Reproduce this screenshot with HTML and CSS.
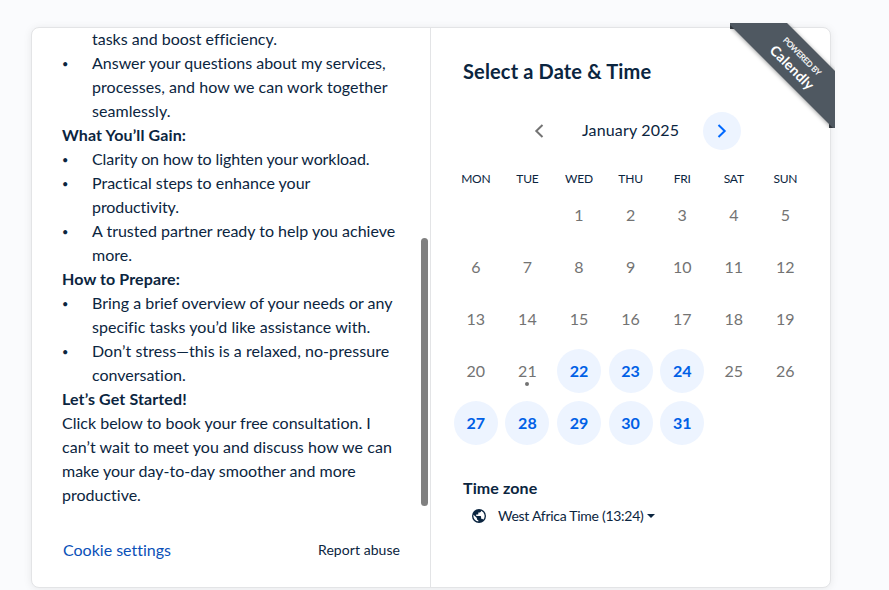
FILE: index.html
```html
<!DOCTYPE html>
<html lang="en">
<head>
<meta charset="utf-8">
<title>Select a Date &amp; Time</title>
<link rel="stylesheet" href="styles.css">
</head>
<body>
<main class="card">
  <section class="details">
    <div class="description">
      <ul>
        <li class="continued">tasks and boost efficiency.</li>
        <li>Answer your questions about my services,<br><span class="wide">processes, and how we can work together<br>seamlessly.</span></li>
      </ul>
      <h2>What You’ll Gain:</h2>
      <ul>
        <li class="tight">Clarity on how to lighten your workload.</li>
        <li>Practical steps to enhance your<br><span class="tight">productivity.</span></li>
        <li>A trusted partner ready to help you achieve<br>more.</li>
      </ul>
      <h2>How to Prepare:</h2>
      <ul>
        <li>Bring a brief overview of your needs or any<br><span class="wide">specific tasks you’d like assistance with.</span></li>
        <li><span class="wide">Don’t stress—this is a relaxed, no-pressure</span><br>conversation.</li>
      </ul>
      <h2>Let’s Get Started!</h2>
      <p>Click below to book your free consultation. I<br><span class="wide">can’t wait to meet you and discuss how we can</span><br>make your day-to-day smoother and more<br>productive.</p>
    </div>
    <footer class="links">
      <a class="cookie">Cookie settings</a>
      <a class="report">Report abuse</a>
    </footer>
    <div class="scrollbar"></div>
  </section>
  <section class="booking">
    <h1>Select a Date &amp; Time</h1>
    <div class="month">
      <span class="nav prev"><svg width="10" height="14" viewBox="0 0 10 14"><path d="M8.5 1 2.3 7l6.2 6"/></svg></span>
      <span class="month-name">January 2025</span>
      <span class="nav next"><svg width="10" height="14" viewBox="0 0 10 14"><path d="M1.5 1 7.7 7l-6.2 6"/></svg></span>
    </div>
    <div class="week"><span>MON</span><span>TUE</span><span>WED</span><span>THU</span><span>FRI</span><span>SAT</span><span>SUN</span></div>
    <div class="days">
      <span></span><span></span><span>1</span><span>2</span><span>3</span><span>4</span><span>5</span>
      <span>6</span><span>7</span><span>8</span><span>9</span><span>10</span><span>11</span><span>12</span>
      <span>13</span><span>14</span><span>15</span><span>16</span><span>17</span><span>18</span><span>19</span>
      <span>20</span><span class="today">21</span><span class="open">22</span><span class="open">23</span><span class="open">24</span><span>25</span><span>26</span>
      <span class="open">27</span><span class="open">28</span><span class="open">29</span><span class="open">30</span><span class="open">31</span>
    </div>
    <h3>Time zone</h3>
    <div class="zone">
      <svg class="globe" width="14" height="14" viewBox="0 0 10 10"><path fill-rule="evenodd" d="M5 0a5 5 0 1 0 0 10A5 5 0 0 0 5 0ZM4.5 8.96A4 4 0 0 1 1.1 4.1L3.5 6.5V7c0 .55.45 1 1 1ZM7.95 7.7A1 1 0 0 0 7 7h-.5V5.5A.5.5 0 0 0 6 5H3V4h1a.5.5 0 0 0 .5-.5v-1h1a1 1 0 0 0 1-1v-.2A4 4 0 0 1 7.95 7.7Z"/></svg>
      <span class="zone-name">West Africa Time (13:24)</span>
      <svg class="caret" width="8" height="4" viewBox="0 0 8 4"><path d="M0 0h8L4 4Z"/></svg>
    </div>
  </section>
  <svg class="ribbon" width="105" height="105" viewBox="0 0 105 105">
    <path class="fold" d="M0 0h8v6H0ZM99 97h6v8h-6Z"/>
    <path class="band" d="M-2 0H57L105 48V107Z"/>
    <text class="powered" transform="translate(71.5 34) rotate(45)" textLength="50">POWERED BY</text>
    <text class="brand" transform="translate(61 45.5) rotate(45)" textLength="56">Calendly</text>
  </svg>
</main>
</body>
</html>
```
FILE: styles.css
```css
* { box-sizing: border-box; }
body {
  margin: 0;
  height: 590px;
  overflow: hidden;
  padding: 27px 0 0 31px;
  background: #fafbfd;
  color: #0b2540;
  font: 16px/24px Lato, "Liberation Sans", sans-serif;
  font-variant-ligatures: none;
}
.card {
  position: relative;
  display: flex;
  width: 800px;
  height: 561px;
  background: #fff;
  border: 1px solid #e3e4e6;
  border-radius: 8px;
  box-shadow: 0 1px 8px rgba(0, 0, 0, .08);
}
.details {
  position: relative;
  width: 399px;
  border-right: 1px solid #e3e4e6;
}
.description { margin-top: -1px; padding-left: 30px; white-space: nowrap; }
h1, h2, h3, p, ul { margin: 0; padding: 0; }
h2 { font-size: 16px; line-height: 24px; letter-spacing: .12px; }
ul { list-style: none; }
li { padding-left: 30px; position: relative; }
li::before { content: "•"; position: absolute; left: 0; top: 1px; font-size: 11px; }
.continued::before { content: none; }
.wide { letter-spacing: .06px; }
.tight { letter-spacing: -.08px; }
.links {
  display: flex;
  justify-content: space-between;
  align-items: center;
  padding: 31px 30px 0 31px;
}
.cookie { color: #0a50b8; }
.report { font-size: 14px; letter-spacing: .06px; }
.scrollbar {
  position: absolute;
  right: 2px;
  top: 210px;
  width: 7px;
  height: 268px;
  border-radius: 4px;
  background: #808080;
}
.booking { width: 399px; padding: 29px 19px 0; }
h1 { padding-left: 13px; font-size: 20px; line-height: 28px; letter-spacing: .15px; }
.month {
  display: flex;
  justify-content: center;
  align-items: center;
  height: 38px;
  margin-top: 27px;
}
.nav { display: flex; align-items: center; justify-content: center; width: 38px; height: 38px; border-radius: 50%; }
.nav path { fill: none; stroke: #737373; stroke-width: 2; }
.next { background: #edf4ff; }
.next path { stroke: #0069ff; }
.month-name { width: 145px; text-align: center; letter-spacing: .18px; line-height: 22px; padding-bottom: 2px; }
.week, .days { display: grid; grid-template-columns: repeat(7, 51.6px); justify-items: center; }
.week { margin-top: 19px; font-size: 12px; line-height: 20px; letter-spacing: -.2px; }
.days { grid-auto-rows: 52px; align-items: center; color: #737373; }
.days span { position: relative; width: 44px; height: 44px; line-height: 44px; text-align: center; border-radius: 50%; }
.days .open { background: #edf4ff; color: #0060e6; font-weight: 700; }
.today::after {
  content: "";
  position: absolute;
  left: 20px;
  bottom: 7px;
  width: 4px;
  height: 4px;
  border-radius: 50%;
  background: #737373;
}
h3 { margin: 27px 0 0 13px; font-size: 16px; line-height: 24px; letter-spacing: .1px; }
.zone { display: flex; align-items: center; height: 20px; margin: 6px 0 0 22px; font-size: 14px; }
.zone svg { fill: #0b2540; }
.zone-name { letter-spacing: -.28px; }
.globe { margin-right: 12px; }
.caret { margin-left: 4px; }
.ribbon { position: absolute; left: 698px; top: -5px; overflow: hidden; }
.fold { fill: #3c434a; }
.band { fill: #4f5861; filter: drop-shadow(0 1px 2px rgba(0, 0, 0, .4)); }
.ribbon text { fill: #fff; text-anchor: middle; dominant-baseline: middle; }
.powered { font-size: 8px; stroke: #fff; stroke-width: .2px; }
.brand { font-size: 14px; font-weight: 700; }
```
